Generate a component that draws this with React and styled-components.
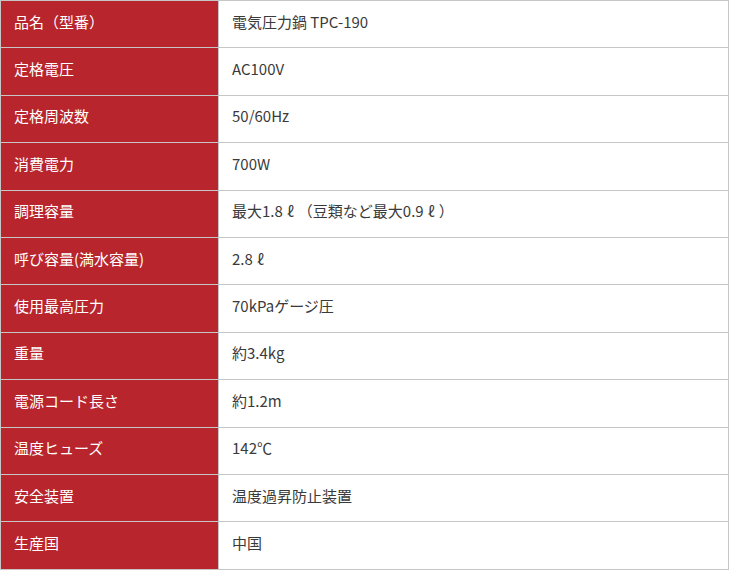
import React from "react";
import styled, { createGlobalStyle } from "styled-components";

const GlobalStyle = createGlobalStyle`
  html, body {
    margin: 0;
    padding: 0;
    background: #ffffff;
  }
  body {
    font-family: "Noto Sans CJK JP", "Noto Sans", sans-serif;
  }
`;

const SpecTable = styled.table`
  width: 729px;
  border-collapse: collapse;
  font-size: 15px;
  border: 1px solid #c6c6c6;

  th,
  td {
    border: 1px solid #c6c6c6;
    padding: 9.5px 13px 14.5px;
    line-height: 22.4px;
    text-align: left;
    font-weight: 400;
    vertical-align: middle;
    white-space: nowrap;
  }
`;

const Label = styled.th`
  width: 191px;
  background: #b8252d;
  color: #ffffff;
`;

const Value = styled.td`
  background: #ffffff;
  color: #3a3a3a;
`;

// full-width litre sign, as the reference font draws it
const Liter = styled.span`
  display: inline-block;
  width: 1em;
  text-align: center;
`;

const L = <Liter>ℓ</Liter>;

const specs = [
  ["品名（型番）", "電気圧力鍋 TPC-190"],
  ["定格電圧", "AC100V"],
  ["定格周波数", "50/60Hz"],
  ["消費電力", "700W"],
  ["調理容量", <>最大1.8{L}（豆類など最大0.9{L}）</>],
  ["呼び容量(満水容量)", <>2.8{L}</>],
  ["使用最高圧力", "70kPaゲージ圧"],
  ["重量", "約3.4kg"],
  ["電源コード長さ", "約1.2m"],
  ["温度ヒューズ", "142℃"],
  ["安全装置", "温度過昇防止装置"],
  ["生産国", "中国"],
];

const App = () => {
  return (
    <>
      <GlobalStyle />
      <SpecTable>
        <tbody>
          {specs.map(([label, value]) => (
            <tr key={label}>
              <Label>{label}</Label>
              <Value>{value}</Value>
            </tr>
          ))}
        </tbody>
      </SpecTable>
    </>
  );
};

export default App;
